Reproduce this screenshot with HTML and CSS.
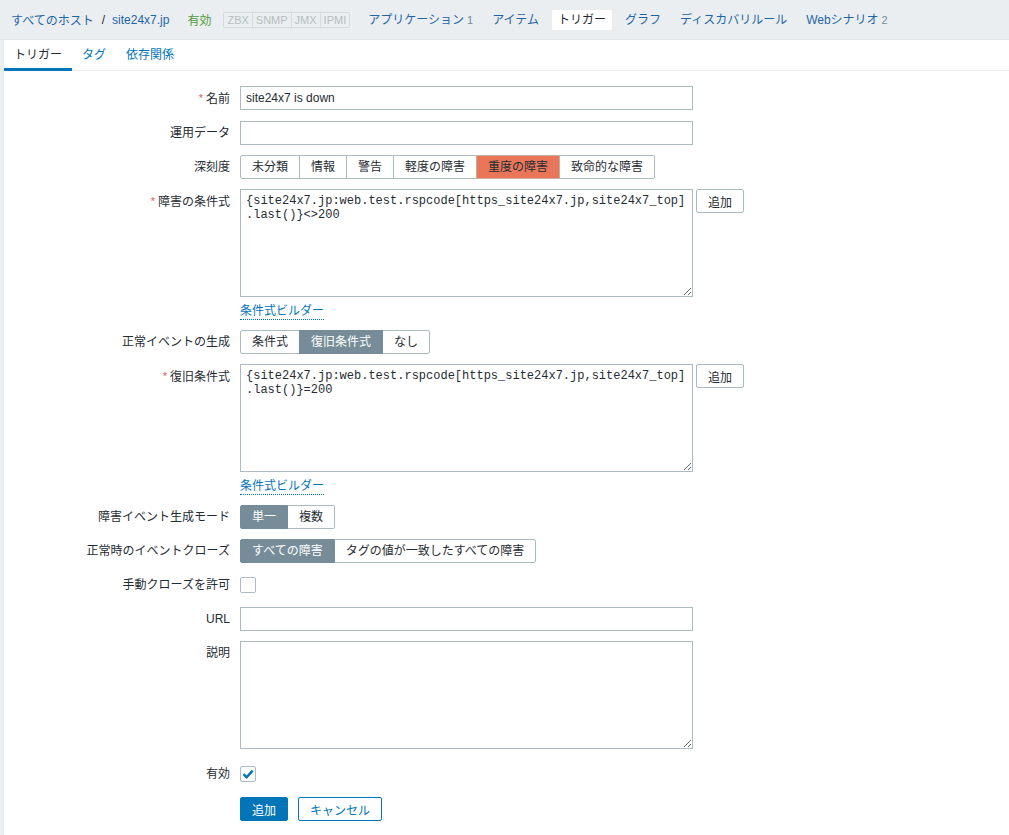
FILE: index.html
```html
<!DOCTYPE html>
<html lang="ja">
<head>
<meta charset="utf-8">
<title>トリガー</title>
<link rel="stylesheet" href="styles.css">
</head>
<body>
<div class="topbar">
  <nav class="crumbs"><a href="#">すべてのホスト</a><span class="sep">/</span><a href="#">site24x7.jp</a></nav>
  <span class="status-on">有効</span>
  <span class="avail"><span>ZBX</span><span>SNMP</span><span>JMX</span><span>IPMI</span></span>
  <ul class="objnav">
    <li><a href="#">アプリケーション</a><span class="cnt">1</span></li>
    <li><a href="#">アイテム</a></li>
    <li class="sel"><span>トリガー</span></li>
    <li><a href="#">グラフ</a></li>
    <li><a href="#">ディスカバリルール</a></li>
    <li><a href="#">Webシナリオ</a><span class="cnt">2</span></li>
  </ul>
</div>
<div class="panel">
  <ul class="tabs">
    <li class="tab active">トリガー</li>
    <li class="tab"><a href="#">タグ</a></li>
    <li class="tab"><a href="#">依存関係</a></li>
  </ul>
  <form class="form">
    <div class="row">
      <label class="lbl req">名前</label>
      <div class="fld"><input class="text" type="text" value="site24x7 is down"></div>
    </div>
    <div class="row">
      <label class="lbl">運用データ</label>
      <div class="fld"><input class="text" type="text" value=""></div>
    </div>
    <div class="row">
      <label class="lbl">深刻度</label>
      <div class="fld">
        <div class="seg">
          <span>未分類</span><span>情報</span><span>警告</span><span>軽度の障害</span><span class="high">重度の障害</span><span>致命的な障害</span>
        </div>
      </div>
    </div>
    <div class="row">
      <label class="lbl req">障害の条件式</label>
      <div class="fld">
        <div class="expr">
          <textarea class="area mono">{site24x7.jp:web.test.rspcode[https_site24x7.jp,site24x7_top].last()}&lt;&gt;200</textarea>
          <button type="button" class="btn-grey">追加</button>
        </div>
        <a href="#" class="builder">条件式ビルダー</a>
      </div>
    </div>
    <div class="row">
      <label class="lbl">正常イベントの生成</label>
      <div class="fld">
        <div class="seg"><span>条件式</span><span class="on">復旧条件式</span><span>なし</span></div>
      </div>
    </div>
    <div class="row">
      <label class="lbl req">復旧条件式</label>
      <div class="fld">
        <div class="expr">
          <textarea class="area mono">{site24x7.jp:web.test.rspcode[https_site24x7.jp,site24x7_top].last()}=200</textarea>
          <button type="button" class="btn-grey">追加</button>
        </div>
        <a href="#" class="builder">条件式ビルダー</a>
      </div>
    </div>
    <div class="row">
      <label class="lbl">障害イベント生成モード</label>
      <div class="fld">
        <div class="seg"><span class="on">単一</span><span>複数</span></div>
      </div>
    </div>
    <div class="row">
      <label class="lbl">正常時のイベントクローズ</label>
      <div class="fld">
        <div class="seg"><span class="on">すべての障害</span><span>タグの値が一致したすべての障害</span></div>
      </div>
    </div>
    <div class="row">
      <label class="lbl">手動クローズを許可</label>
      <div class="fld chk-fld"><span class="chk"></span></div>
    </div>
    <div class="row">
      <label class="lbl">URL</label>
      <div class="fld"><input class="text" type="text" value=""></div>
    </div>
    <div class="row">
      <label class="lbl">説明</label>
      <div class="fld"><textarea class="area desc"></textarea></div>
    </div>
    <div class="row">
      <label class="lbl">有効</label>
      <div class="fld chk-fld"><span class="chk"><svg width="14" height="14" viewBox="0 0 14 14"><path d="M2.5 7.2 L5.6 10.2 L11.6 3.6" fill="none" stroke="#0275b8" stroke-width="2.4"/></svg></span></div>
    </div>
    <div class="row buttons">
      <span></span>
      <div class="fld">
        <button type="button" class="btn primary">追加</button>
        <button type="button" class="btn alt">キャンセル</button>
      </div>
    </div>
  </form>
</div>
</body>
</html>
```
FILE: styles.css
```css
html, body {
  height: 100%;
}
body {
  margin: 0;
  background: #ebeef0;
  font: 12px "Liberation Sans", Arial, "Noto Sans CJK JP", sans-serif;
  color: #1f2c33;
  overflow: hidden;
}
a {
  color: #0275b8;
  text-decoration: none;
}

/* top bar */
.topbar {
  display: flex;
  align-items: center;
  height: 40px;
  border-bottom: 1px solid #dfe4e7;
  padding-left: 11px;
  box-sizing: border-box;
}
.crumbs {
  display: flex;
  align-items: center;
}
.crumbs a {
  color: #1f65a6;
}
.crumbs .sep {
  margin: 0 7px 0 8px;
  color: #1f2c33;
}
.status-on {
  margin-left: 18px;
  color: #4f9a3c;
}
.avail {
  display: inline-flex;
  margin-left: 12px;
  font-size: 11px;
}
.avail span {
  border: 1px solid #d4dadd;
  margin-left: -1px;
  padding: 0 3px;
  line-height: 14px;
  color: #b4bec3;
}
.avail span:first-child {
  margin-left: 0;
  border-radius: 2px 0 0 2px;
}
.avail span:last-child {
  border-radius: 0 2px 2px 0;
}
.objnav {
  display: flex;
  gap: 7px;
  list-style: none;
  margin: 0 0 0 12px;
  padding: 0;
}
.objnav li {
  padding: 0 6px;
  line-height: 20px;
  border-radius: 2px;
}
.objnav li a {
  color: #1f65a6;
}
.objnav li.sel {
  background: #fff;
  color: #1f2c33;
}
.objnav .cnt {
  margin-left: 3px;
  color: #768d99;
  font-size: 11px;
}

/* panel */
.panel {
  margin-left: 4px;
  background: #fff;
  height: calc(100% - 40px);
}
.tabs {
  display: flex;
  list-style: none;
  margin: 0;
  padding: 0;
  height: 31px;
  box-sizing: border-box;
  border-bottom: 1px solid #ebeef0;
}
.tab {
  height: 31px;
  box-sizing: border-box;
  padding: 0 10px;
  line-height: 30px;
  margin-bottom: -1px;
}
.tab.active {
  border-bottom: 3px solid #0275b8;
  color: #1f2c33;
}

/* form */
.form {
  display: flex;
  flex-direction: column;
  gap: 10px;
  padding-top: 15px;
}
.row {
  display: grid;
  grid-template-columns: 226px 1fr;
  column-gap: 10px;
}
.lbl {
  text-align: right;
  line-height: 24px;
  white-space: nowrap;
}
.lbl.req::before {
  content: "*";
  color: #e45959;
  margin-right: 3px;
  font-size: 11px;
  vertical-align: 1px;
}
.fld {
  min-height: 24px;
}
.text {
  display: block;
  width: 453px;
  height: 24px;
  box-sizing: border-box;
  border: 1px solid #acbbc2;
  padding: 0 5px;
  margin: 0;
  font: 12px "Liberation Sans", Arial, "Noto Sans CJK JP", sans-serif;
  color: #1f2c33;
  border-radius: 0;
  outline: none;
}
.seg {
  display: flex;
  width: fit-content;
}
.seg span {
  border: 1px solid #acbbc2;
  margin-left: -1px;
  padding: 0 11px;
  line-height: 22px;
  background: #fff;
}
.seg span:first-child {
  margin-left: 0;
  border-radius: 2px 0 0 2px;
}
.seg span:last-child {
  border-radius: 0 2px 2px 0;
}
.seg span.on {
  background: #768d99;
  border-color: #768d99;
  color: #fff;
  position: relative;
}
.seg span.high {
  background: #e97659;
  border-color: #c9ad9f;
  position: relative;
}
.expr {
  display: flex;
  align-items: flex-start;
}
.area {
  display: block;
  width: 453px;
  height: 108px;
  box-sizing: border-box;
  border: 1px solid #acbbc2;
  padding: 4px 5px;
  margin: 0;
  resize: both;
  border-radius: 0;
  outline: none;
  color: #1f2c33;
}
.mono {
  font: 12px/14px "Liberation Mono", "Courier New", monospace;
}
.desc {
  margin-bottom: 3px;
}
.btn-grey {
  margin-left: 3px;
  height: 24px;
  padding: 0 11px;
  border: 1px solid #acbbc2;
  background: #fff;
  color: #1f2c33;
  border-radius: 2px;
  font: 12px "Liberation Sans", Arial, "Noto Sans CJK JP", sans-serif;
}
.builder {
  display: block;
  width: fit-content;
  margin-top: 6px;
  line-height: 16px;
  border-bottom: 1px dotted #0275b8;
}
.chk-fld {
  display: flex;
  align-items: center;
  height: 24px;
}
.chk {
  display: flex;
  align-items: center;
  justify-content: center;
  width: 16px;
  height: 16px;
  box-sizing: border-box;
  border: 1px solid #acbbc2;
  border-radius: 2px;
  background: #fff;
}
.buttons {
  margin-top: 1px;
}
.buttons .fld {
  display: flex;
  gap: 10px;
}
.btn {
  height: 24px;
  padding: 0 11px;
  border-radius: 2px;
  font: 12px "Liberation Sans", Arial, "Noto Sans CJK JP", sans-serif;
  cursor: pointer;
}
.btn.primary {
  background: #0275b8;
  border: 1px solid #0275b8;
  color: #fff;
}
.btn.alt {
  background: #fff;
  border: 1px solid #0275b8;
  color: #0275b8;
}
```
